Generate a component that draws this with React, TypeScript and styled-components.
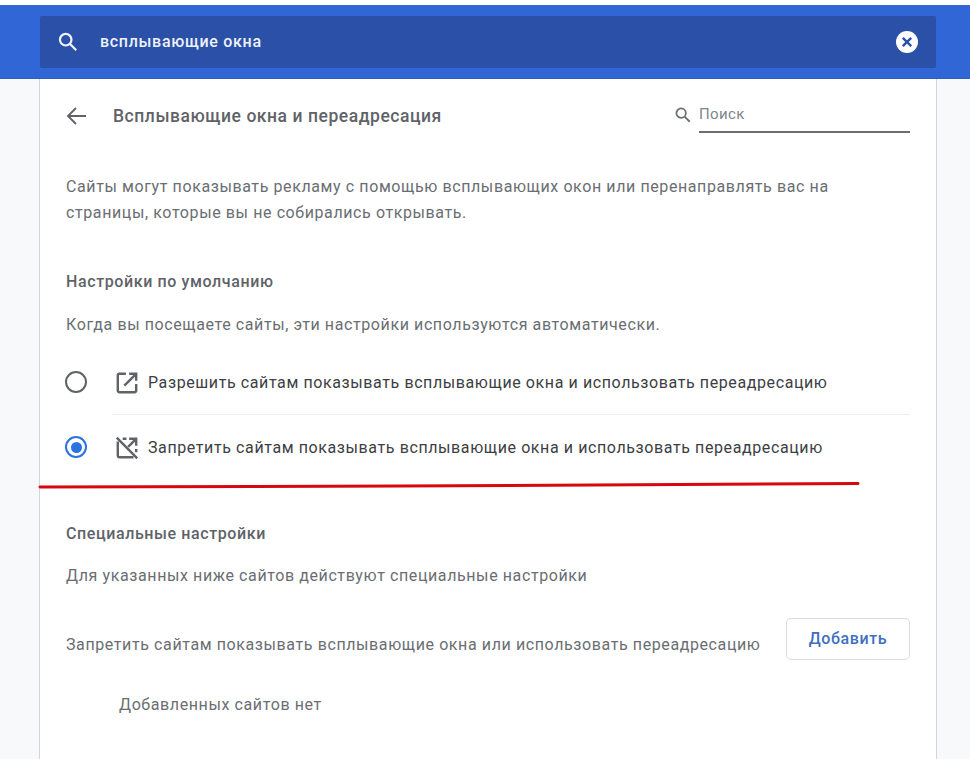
import React from "react";
import styled, { createGlobalStyle } from "styled-components";

const Global = createGlobalStyle`
  html, body { margin: 0; padding: 0; background: #f8f9fa; }
  body { font-family: Roboto, "Noto Sans", sans-serif; color: #5f6368; }
  #root { height: 759px; overflow: hidden; }
`;

const Page = styled.div`
  position: relative;
  height: 759px;
  overflow: hidden;
  padding-top: 5px;
  box-sizing: border-box;
  background: linear-gradient(#ffffff 0 5px, #f8f9fa 5px);
`;

const Header = styled.header`
  height: 74px;
  box-sizing: border-box;
  padding: 11px 34px 10px 40px;
  background: #3066d6;
  border-bottom: 1px solid #2f5fc4;
`;

const SearchBar = styled.div`
  height: 52px;
  display: flex;
  align-items: center;
  padding: 0 17px 0 17px;
  background: #2a50a8;
  border-radius: 2px;
  color: #fff;
`;

const SearchText = styled.span`
  flex: 1;
  margin-left: 21px;
  margin-top: -2px;
  font-size: 16px;
  font-weight: 500;
  letter-spacing: 0.7px;
  color: #eef2fb;
`;

const Card = styled.main`
  width: 898px;
  margin-left: 39px;
  height: 680px;
  box-sizing: border-box;
  padding: 0 26px;
  background: #fff;
  border-left: 1px solid #d3d5d8;
  border-right: 1px solid #d3d5d8;
`;

const TopRow = styled.div`
  height: 74px;
  display: flex;
  align-items: center;
`;

const Title = styled.h1`
  flex: 1;
  margin: 0 0 0 27px;
  font-size: 17.5px;
  font-weight: 500;
  letter-spacing: 0.55px;
  color: #5f6368;
`;

const MiniSearch = styled.div`
  width: 236px;
  display: flex;
  align-items: center;
  margin-top: 1px;
  & > svg {
    margin-top: -4px;
  }
`;

const MiniField = styled.div`
  flex: 1;
  margin-left: 7px;
  padding: 5px 0 8px;
  border-bottom: 2px solid #6b6e72;
  font-size: 15px;
  letter-spacing: 0.4px;
  color: #80868b;
`;

const Intro = styled.p`
  margin: 21px 0 0;
  font-size: 16px;
  letter-spacing: 0.6px;
  line-height: 26px;
  color: #6a6e72;
`;

const SectionTitle = styled.h2<{ $top: number }>`
  margin: ${(p) => p.$top}px 0 0;
  font-size: 16px;
  letter-spacing: 0.6px;
  font-weight: 500;
  line-height: 24px;
  color: #5f6368;
`;

const Note = styled.p<{ $top: number }>`
  margin: ${(p) => p.$top}px 0 0;
  font-size: 16px;
  letter-spacing: 0.6px;
  line-height: 24px;
  color: #6a6e72;
`;

const Options = styled.div`
  margin-top: 13px;
`;

const Option = styled.div<{ $divider?: boolean }>`
  height: 65px;
  display: flex;
  align-items: center;
  position: relative;
  ${(p) => p.$divider && `&::after { content: ""; position: absolute; left: 47px; right: 0; bottom: 0; height: 1px; background: #eceded; }`}
`;

const Radio = styled.span<{ $on?: boolean }>`
  width: 22px;
  height: 22px;
  box-sizing: border-box;
  flex: none;
  margin-left: -1px;
  margin-top: -1px;
  border-radius: 50%;
  border: 2.5px solid ${(p) => (p.$on ? "#2a73e0" : "#5f6368")};
  display: flex;
  align-items: center;
  justify-content: center;
  &::after {
    content: "";
    display: ${(p) => (p.$on ? "block" : "none")};
    width: 11px;
    height: 11px;
    border-radius: 50%;
    background: #2a73e0;
  }
`;

const OptionIcon = styled.svg`
  flex: none;
  width: 26px;
  height: 26px;
  margin: 0 8px 0 27px;
  fill: none;
  stroke: #5f6368;
  stroke-width: 2.2;
`;

const OptionText = styled.span`
  font-size: 16px;
  letter-spacing: 0.6px;
  margin-top: -1px;
  color: #3c4043;
`;

const AddRow = styled.div`
  margin-top: 30px;
  display: flex;
  align-items: center;
  justify-content: space-between;
`;

const AddLabel = styled.span`
  font-size: 16px;
  letter-spacing: 0.6px;
  color: #6a6e72;
  margin-top: 10px;
`;

const AddButton = styled.button`
  width: 124px;
  height: 42px;
  flex: none;
  background: #fff;
  border: 1px solid #dadce0;
  border-radius: 5px;
  font: 500 16px Roboto, sans-serif;
  letter-spacing: 0.6px;
  color: #3f6fbf;
  padding: 0 0 2px;
`;

const Empty = styled.p`
  margin: 35px 0 0 53px;
  font-size: 16px;
  letter-spacing: 0.6px;
  color: #6a6e72;
`;

const Scribble = styled.svg`
  position: absolute;
  left: 0;
  top: 470px;
  width: 970px;
  height: 30px;
  pointer-events: none;
`;

const Magnifier = ({ size, color }: { size: number; color: string }) => (
  <svg width={size} height={size} viewBox="0 0 24 24" fill="none" stroke={color} strokeWidth={2.4}>
    <circle cx="9.5" cy="9.5" r="6.3" />
    <path d="M14.2 14.2 21 21" />
  </svg>
);

export default function App() {
  return (
    <Page>
      <Global />
      <Header>
        <SearchBar>
          <Magnifier size={22} color="#eef2fb" />
          <SearchText>всплывающие окна</SearchText>
          <svg width="24" height="24" viewBox="0 0 24 24">
            <circle cx="12" cy="12" r="11" fill="#fff" />
            <path d="M7.8 7.8 16.2 16.2M16.2 7.8 7.8 16.2" stroke="#2a50a8" strokeWidth="2.4" />
          </svg>
        </SearchBar>
      </Header>
      <Card>
        <TopRow>
          <svg width="20" height="20" viewBox="0 0 20 20" fill="none" stroke="#5f6368" strokeWidth="1.9">
            <path d="M20 10H2M10 2 2 10l8 8" />
          </svg>
          <Title>Всплывающие окна и переадресация</Title>
          <MiniSearch>
            <Magnifier size={18} color="#6a6e72" />
            <MiniField>Поиск</MiniField>
          </MiniSearch>
        </TopRow>
        <Intro>
          Сайты могут показывать рекламу с помощью всплывающих окон или перенаправлять вас на
          <br />
          страницы, которые вы не собирались открывать.
        </Intro>
        <SectionTitle $top={44}>Настройки по умолчанию</SectionTitle>
        <Note $top={19}>Когда вы посещаете сайты, эти настройки используются автоматически.</Note>
        <Options>
          <Option $divider>
            <Radio />
            <OptionIcon viewBox="0 0 24 24">
              <path d="M11 3.500H5A1.500 1.500 0 0 0 3.500 5v14A1.500 1.500 0 0 0 5 20.500h14a1.500 1.500 0 0 0 1.500-1.500v-6" />
              <path d="M9.500 14.500 20 4M14 3.500h6.500V10" />
            </OptionIcon>
            <OptionText>Разрешить сайтам показывать всплывающие окна и использовать переадресацию</OptionText>
          </Option>
          <Option>
            <Radio $on />
            <OptionIcon viewBox="0 0 24 24">
              <path d="M2.500 2.500 21.500 21.500" />
              <path d="M3.500 6v13A1.500 1.500 0 0 0 5 20.500h13M8 3.500h3.500M14 3.500h6.500V10M13 11l7-7M20.500 13v3" />
            </OptionIcon>
            <OptionText>Запретить сайтам показывать всплывающие окна и использовать переадресацию</OptionText>
          </Option>
        </Options>
        <SectionTitle $top={42}>Специальные настройки</SectionTitle>
        <Note $top={18}>Для указанных ниже сайтов действуют специальные настройки</Note>
        <AddRow>
          <AddLabel>Запретить сайтам показывать всплывающие окна или использовать переадресацию</AddLabel>
          <AddButton>Добавить</AddButton>
        </AddRow>
        <Empty>Добавленных сайтов нет</Empty>
      </Card>
      <Scribble viewBox="0 0 970 30">
        <path d="M40 17 L400 16 L858 13.500" stroke="#d8060f" strokeWidth="3" strokeLinecap="round" fill="none" />
      </Scribble>
    </Page>
  );
}
